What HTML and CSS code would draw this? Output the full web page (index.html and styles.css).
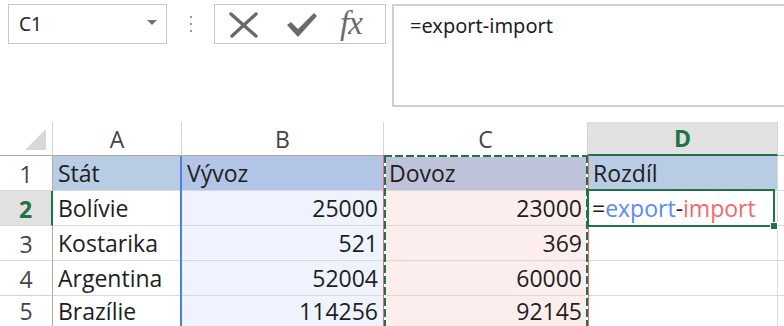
FILE: index.html
```html
<!DOCTYPE html>
<html>
<head>
<meta charset="utf-8">
<link rel="stylesheet" href="styles.css">
</head>
<body>
<div class="toolbar">
  <div class="namebox">
    <span class="namebox-text">C1</span>
    <span class="namebox-arrow"></span>
  </div>
  <div class="grip"><span></span><span></span><span></span></div>
  <div class="buttons">
    <svg class="btn-x" width="30" height="26" viewBox="0 0 30 26">
      <path d="M2 2 Q12 11 27 24" stroke="#6a6a6a" stroke-width="3.4" fill="none" stroke-linecap="round"/>
      <path d="M27 2 Q16 12 3 24" stroke="#6a6a6a" stroke-width="3.4" fill="none" stroke-linecap="round"/>
    </svg>
    <svg class="btn-check" width="32" height="26" viewBox="0 0 32 26">
      <path d="M1 13 L5 10 L12 17 L28 1 L31 4 L12 25 Z" fill="#6a6a6a"/>
    </svg>
    <span class="btn-fx">fx</span>
  </div>
  <div class="formulabar">=export-import</div>
</div>

<div class="sheet">
  <div class="corner"><span class="tri"></span></div>
  <div class="colhdr">A</div>
  <div class="colhdr">B</div>
  <div class="colhdr">C</div>
  <div class="colhdr colhdr-active">D</div>
  <div class="colhdr colhdr-rest"></div>

  <div class="rowhdr">1</div>
  <div class="cell head-a">Stát</div>
  <div class="cell head-b">Vývoz</div>
  <div class="cell head-c">Dovoz</div>
  <div class="cell head-d">Rozdíl</div>
  <div class="cell rest"></div>

  <div class="rowhdr rowhdr-active">2</div>
  <div class="cell">Bolívie</div>
  <div class="cell num ref-b">25000</div>
  <div class="cell num ref-c">23000</div>
  <div class="cell edit">=<span class="f-blue">export</span>-<span class="f-red">import</span></div>
  <div class="cell rest"></div>

  <div class="rowhdr">3</div>
  <div class="cell">Kostarika</div>
  <div class="cell num ref-b">521</div>
  <div class="cell num ref-c">369</div>
  <div class="cell"></div>
  <div class="cell rest"></div>

  <div class="rowhdr">4</div>
  <div class="cell">Argentina</div>
  <div class="cell num ref-b">52004</div>
  <div class="cell num ref-c">60000</div>
  <div class="cell"></div>
  <div class="cell rest"></div>

  <div class="rowhdr last">5</div>
  <div class="cell last">Brazílie</div>
  <div class="cell last num ref-b">114256</div>
  <div class="cell last num ref-c">92145</div>
  <div class="cell last"></div>
  <div class="cell last rest"></div>

  <div class="blue-range"></div>
  <div class="red-range"></div>
  <div class="marquee"></div>
  <div class="active-cell"><span class="fill-handle"></span></div>
</div>
</body>
</html>
```

FILE: styles.css
```css
html, body {
  margin: 0;
  padding: 0;
  background: #ffffff;
  overflow: hidden;
}
body {
  width: 784px;
  height: 326px;
  font-family: "Open Sans", "Noto Sans", sans-serif;
}

/* ---------- toolbar ---------- */
.toolbar {
  display: flex;
  align-items: flex-start;
  padding-top: 4px;
  height: 103px;
}
.namebox {
  box-sizing: border-box;
  margin-left: 8px;
  width: 159px;
  height: 40px;
  border: 1px solid #c6c6c6;
  display: flex;
  align-items: center;
  justify-content: space-between;
  padding: 0 9px 0 10px;
}
.namebox-text {
  font-family: "Noto Sans", sans-serif;
  font-size: 19px;
  color: #262626;
  margin-top: -1px;
}
.namebox-arrow {
  width: 0;
  height: 0;
  border-left: 5px solid transparent;
  border-right: 5px solid transparent;
  border-top: 5px solid #707070;
  margin-top: -3px;
}
.grip {
  width: 47px;
  height: 40px;
  display: flex;
  flex-direction: column;
  align-items: center;
  justify-content: center;
  gap: 5px;
}
.grip span {
  width: 2px;
  height: 2px;
  background: #9a9a9a;
}
.buttons {
  box-sizing: border-box;
  width: 172px;
  height: 40px;
  border: 1px solid #c6c6c6;
  display: flex;
  align-items: center;
  padding-left: 14px;
}
.btn-x {
  margin-top: 1px;
}
.btn-check {
  margin-left: 27px;
  margin-top: 2px;
}
.btn-fx {
  margin-left: 22px;
  font-family: "Liberation Serif", "DejaVu Serif", serif;
  font-style: italic;
  font-size: 33px;
  color: #6a6a6a;
  letter-spacing: -1px;
  margin-top: -2px;
}
.formulabar {
  box-sizing: border-box;
  margin-left: 6px;
  flex: 1;
  height: 103px;
  border: 2px solid #d0d0d0;
  border-right: none;
  padding: 5px 0 0 16px;
  font-family: "Noto Sans", sans-serif;
  font-size: 20px;
  color: #1e1e1e;
  line-height: 30px;
}

/* ---------- sheet ---------- */
.sheet {
  position: relative;
  margin-top: 15px;
  display: grid;
  grid-template-columns: 53px 129px 202px 204px 190px 6px;
  grid-template-rows: 34px repeat(4, 35px) 30px;
  overflow: hidden;
  height: 204px;
}
.corner, .colhdr, .rowhdr, .cell {
  box-sizing: border-box;
}
.corner {
  border-right: 1px solid #d4d4d4;
  border-bottom: 1px solid #a6a6a6;
  position: relative;
}
.tri {
  position: absolute;
  right: 6px;
  bottom: 5px;
  width: 0;
  height: 0;
  border-left: 21px solid transparent;
  border-bottom: 21px solid #d8d8d8;
}
.colhdr {
  border-right: 1px solid #d4d4d4;
  border-bottom: 1px solid #a6a6a6;
  text-align: center;
  font-size: 23px;
  line-height: 34px;
  color: #444444;
}
.colhdr-active {
  background: #e1e1e1;
  color: #217346;
  font-weight: bold;
  border-bottom: 2px solid #217346;
  line-height: 33px;
}
.colhdr-rest {
  border-right: none;
}
.rowhdr {
  border-right: 1px solid #ababab;
  border-bottom: 1px solid #d4d4d4;
  text-align: center;
  font-size: 23px;
  line-height: 34px;
  padding-top: 1px;
  color: #444444;
}
.rowhdr-active {
  background: #e1e1e1;
  color: #217346;
  font-weight: bold;
  border-right: 2px solid #217346;
}
.cell {
  border-right: 1px solid #d9d9d9;
  border-bottom: 1px solid #d9d9d9;
  font-size: 23px;
  line-height: 34px;
  padding: 0 5px 0 5px;
  color: #1e1e1e;
  white-space: nowrap;
  overflow: hidden;
}
.last {
  line-height: 30px;
  border-bottom: none;
}
.rowhdr.last {
  padding-top: 0;
}
.cell.rest {
  border-right: none;
}
.num {
  text-align: right;
}
.head-a { background: #b8cce4; }
.head-b { background: #b3c5e6; }
.head-c { background: #bfc3d9; }
.head-d { background: #b8cce4; }
.ref-b { background: #eef3fd; }
.ref-c { background: #fdeeee; }
.edit {
  padding-left: 4px;
}
.f-blue { color: #5a8cf3; }
.f-red { color: #f26a6c; }

/* ---------- overlays ---------- */
.blue-range {
  position: absolute;
  left: 180px;
  top: 34px;
  width: 2px;
  bottom: 0;
  background: #4f7fe0;
}
.red-range {
  position: absolute;
  left: 383px;
  top: 33px;
  width: 206px;
  height: 200px;
  box-sizing: border-box;
  border-left: 1px solid #e67070;
  border-right: 1px solid #e67070;
}
.marquee {
  position: absolute;
  left: 384px;
  top: 33px;
  width: 204px;
  height: 200px;
  background:
    repeating-linear-gradient(90deg, #217346 0 8px, #ffffff 8px 11px) top left / 100% 2px no-repeat,
    repeating-linear-gradient(180deg, #217346 0 8px, #ffffff 8px 11px) top left / 2px 100% no-repeat,
    repeating-linear-gradient(180deg, #217346 0 8px, #ffffff 8px 11px) top right / 2px 100% no-repeat;
}
.active-cell {
  position: absolute;
  left: 587px;
  top: 67px;
  width: 188px;
  height: 38px;
  box-sizing: border-box;
  border: 2px solid #217346;
}
.fill-handle {
  position: absolute;
  right: -5px;
  bottom: -5px;
  width: 6px;
  height: 6px;
  background: #217346;
  border: 1px solid #ffffff;
}
```
